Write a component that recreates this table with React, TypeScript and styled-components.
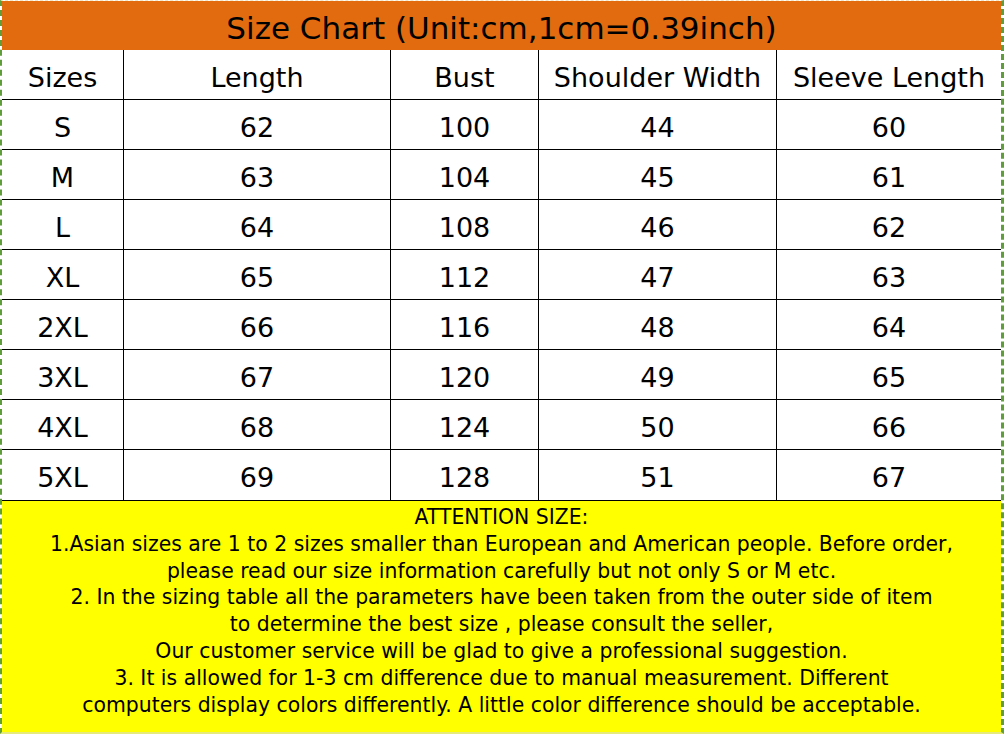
import React from "react";
import styled, { createGlobalStyle } from "styled-components";

const GlobalStyle = createGlobalStyle`
  html, body {
    margin: 0;
    padding: 0;
    background: #fff;
  }
`;

const columns = ["Sizes", "Length", "Bust", "Shoulder Width", "Sleeve Length"];

const rows = [
  ["S", "62", "100", "44", "60"],
  ["M", "63", "104", "45", "61"],
  ["L", "64", "108", "46", "62"],
  ["XL", "65", "112", "47", "63"],
  ["2XL", "66", "116", "48", "64"],
  ["3XL", "67", "120", "49", "65"],
  ["4XL", "68", "124", "50", "66"],
  ["5XL", "69", "128", "51", "67"],
];

const notes = [
  "ATTENTION SIZE:",
  "1.Asian sizes are 1 to 2 sizes smaller than European and American people. Before order,",
  "please read our size information carefully but not only S or M etc.",
  "2. In the sizing table all the parameters have been taken from the outer side of item",
  "to determine the best size , please consult the seller,",
  "Our customer service will be glad to give a professional suggestion.",
  "3. It is allowed for 1-3 cm difference due to manual measurement. Different",
  "computers display colors differently. A little color difference should be acceptable.",
];

export default function App() {
  return (
    <>
      <GlobalStyle />
      <Sheet>
        <Title>Size Chart (Unit:cm,1cm=0.39inch)</Title>
        <Grid>
          {columns.map((c, i) => (
            <Cell key={c} $last={i === columns.length - 1}>
              {c}
            </Cell>
          ))}
          {rows.map((r) =>
            r.map((v, i) => (
              <Cell key={r[0] + i} $last={i === r.length - 1}>
                {v}
              </Cell>
            ))
          )}
        </Grid>
        <Notice>
          {notes.map((n) => (
            <NoticeLine key={n}>{n}</NoticeLine>
          ))}
        </Notice>
      </Sheet>
    </>
  );
}

const Sheet = styled.div`
  width: 1004px;
  height: 734px;
  box-sizing: border-box;
  border-left: 2px dashed #5f9e3a;
  border-right: 3px dashed #5f9e3a;
  border-top: 1px dashed #f4e8c8;
  border-bottom: 2px solid #e6ea7a;
  display: flex;
  flex-direction: column;
  font-family: "DejaVu Sans", Verdana, sans-serif;
  color: #000;
`;

const Title = styled.div`
  height: 49px;
  background: #e26b0f;
  display: flex;
  align-items: center;
  justify-content: center;
  font-size: 31px;
  padding-top: 4px;
  box-sizing: border-box;
`;

const Grid = styled.div`
  display: grid;
  grid-template-columns: 122px 267px 148px 238px 1fr;
  grid-auto-rows: 50px;
  border-bottom: 1px solid #000;
`;

const Cell = styled.div<{ $last?: boolean }>`
  display: flex;
  align-items: center;
  justify-content: center;
  padding-top: 5px;
  box-sizing: border-box;
  border-bottom: 1px solid #000;
  border-right: ${(p) => (p.$last ? "none" : "1px solid #000")};
  font-size: 27px;
  background: #fff;
  &:nth-last-child(-n + 5) {
    border-bottom: none;
  }
`;

const Notice = styled.div`
  flex: 1;
  background: #ffff00;
  display: flex;
  flex-direction: column;
  align-items: center;
  padding-top: 3px;
`;

const NoticeLine = styled.div`
  font-size: 20.4px;
  line-height: 26.8px;
  text-align: center;
  white-space: nowrap;
`;
